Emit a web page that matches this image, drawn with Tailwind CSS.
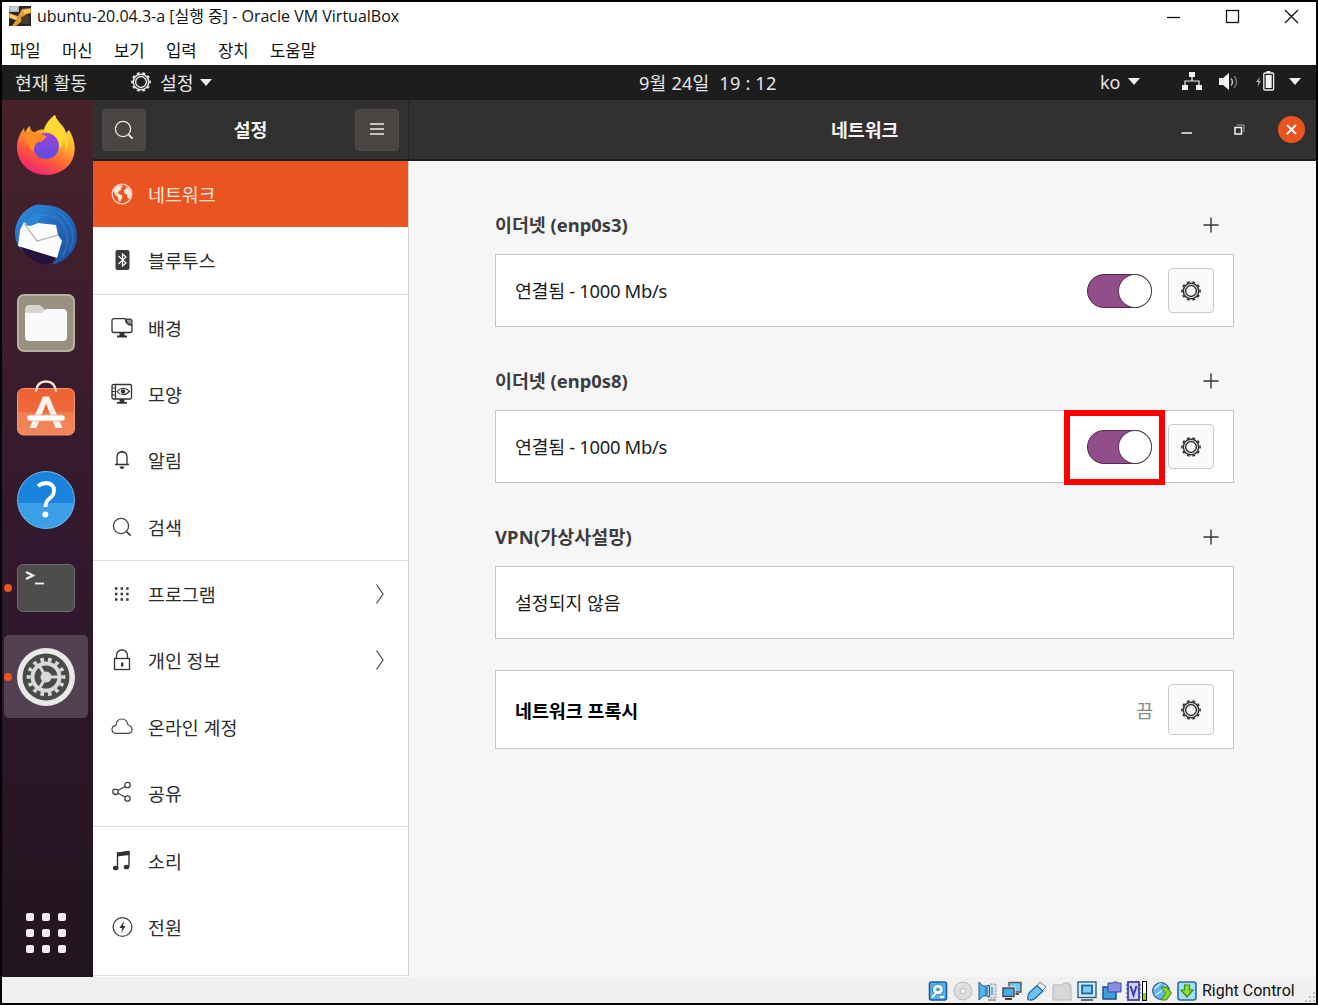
<!DOCTYPE html>
<html lang="ko">
<head>
<meta charset="utf-8">
<title>ubuntu-20.04.3-a - Oracle VM VirtualBox</title>
<script src="https://cdn.jsdelivr.net/npm/@tailwindcss/browser@4"></script>
</head>
<body class="w-[1318px] h-[1005px] overflow-hidden">
<svg class="hidden">
  <defs>
    <symbol id="gear" viewBox="0 0 24 24">
      <g fill="none" stroke="currentColor">
        <circle cx="12" cy="12" r="8.4" stroke-width="1.6"/>
        <circle cx="12" cy="12" r="9.9" stroke-width="1.8" pathLength="120" stroke-dasharray="6 6" stroke-dashoffset="3"/>
        <circle cx="12" cy="12" r="5.9" stroke-width="1.6"/>
      </g>
    </symbol>
    <symbol id="search" viewBox="0 0 20 20">
      <g fill="none" stroke="currentColor" stroke-width="1.3"><circle cx="9" cy="9" r="7.6"/><path d="M14.3 14.3 L18.6 18.6" stroke-width="1.8"/></g>
    </symbol>
  </defs>
</svg>
<div class="w-[1318px] h-[1005px] border-2 border-black bg-white flex flex-col font-['Noto_Sans','Noto_Sans_CJK_KR',sans-serif]">

  <!-- window title -->
  <div class="h-[30px] flex items-center shrink-0 text-[#111] pb-[2px]">
    <svg class="w-[22px] h-[20px] ml-[7px]" viewBox="0 0 22 20">
      <rect width="22" height="20" fill="#2b2522"/>
      <path d="M0 0h10v6H0z" fill="#a9b1bd"/><path d="M1 2h8M2 4h6" stroke="#e8edf2"/>
      <path d="M0 7 L9 10 L13 3 L22 2 V7 L16 9 L12 16 L7 20 H3 L7 14 L0 12Z" fill="#e39a35"/>
      <path d="M1 8 L8 11 L7 14 L1 11Z" fill="#f7d27a"/><path d="M14 4 L21 3 V6 L15 8Z" fill="#f9c865"/>
      <path d="M12 11 L20 9 V18 H13Z" fill="#473a31"/>
    </svg>
    <span class="ml-[6px] w-[362px] text-[16px] leading-[20px] whitespace-nowrap font-['Open_Sans','Noto_Sans_CJK_KR',sans-serif]">ubuntu-20.04.3-a [실행 중] - Oracle VM VirtualBox</span>
    <div class="ml-auto flex items-center mr-[17px] gap-[44px]">
      <svg class="w-[15px] h-[15px]" viewBox="0 0 15 15"><path d="M1 8.500H14" stroke="#111" stroke-width="1.300"/></svg>
      <svg class="w-[15px] h-[15px]" viewBox="0 0 15 15"><rect x="1.500" y="1.500" width="12" height="12" fill="none" stroke="#111" stroke-width="1.300"/></svg>
      <svg class="w-[15px] h-[15px]" viewBox="0 0 15 15"><path d="M1 1L14 14M14 1L1 14" stroke="#111" stroke-width="1.300"/></svg>
    </div>
  </div>
  <div class="h-[33px] shrink-0 flex items-center pl-[8px] text-[16.700px] leading-[20px] text-[#111] pt-[2px] whitespace-nowrap font-['Noto_Sans_CJK_KR',sans-serif]">
    <span class="w-[52px]">파일</span><span class="w-[52px]">머신</span><span class="w-[52px]">보기</span><span class="w-[52px]">입력</span><span class="w-[52px]">장치</span><span>도움말</span>
  </div>

  <!-- GNOME top bar -->
  <div class="h-[35px] shrink-0 bg-[#1d1d1d] flex items-center text-[#e6e6e6] text-[18.3px] leading-[24px] whitespace-nowrap">
    <span class="ml-[13px] w-[115px]">현재 활동</span>
    <svg class="w-[22px] h-[22px] -mt-[2px]"><use href="#gear"/></svg>
    <span class="ml-[8px] w-[40px]">설정</span>
    <svg class="w-[12px] h-[7px]" viewBox="0 0 12 7"><path d="M0 0H12L6 7Z" fill="#eee"/></svg>
    <span class="ml-[427px] w-[140px] text-[18.200px] tracking-[0.180px] whitespace-pre pt-[1px]">9월 24일  19 : 12</span>
    <span class="ml-[321px] w-[28px] text-[18px] -mt-[1px]">ko</span>
    <svg class="w-[12px] h-[7px] -mt-[2px]" viewBox="0 0 12 7"><path d="M0 0H12L6 7Z" fill="#eee"/></svg>
    <svg class="ml-[42px] w-[20px] h-[18px] -mt-[3px]" viewBox="0 0 20 18" fill="#f2f2f2"><path d="M7 0h6v5H7zM0 13h6v5H0zM14 13h6v5h-6z"/><path d="M10 5v4M3 13V9h14v4" fill="none" stroke="#f2f2f2" stroke-width="1.2"/></svg>
    <svg class="ml-[17px] w-[20px] h-[18px] -mt-[2px]" viewBox="0 0 20 18"><path d="M0 5h4l6-5v17l-6-5H0z" fill="#f2f2f2"/><path d="M12 5.5q3 3.5 0 7" fill="none" stroke="#bbb" stroke-width="1.5"/><path d="M15 3q5 6 0 12" fill="none" stroke="#777" stroke-width="1.4"/></svg>
    <svg class="ml-[17px] w-[19px] h-[20px] -mt-[3px]" viewBox="0 0 19 20"><path d="M4 6 L0 11 H2.4 L1.5 16 L5 10H3Z" fill="#aaa"/><path d="M10.5 0h4v2h-4z" fill="#eee"/><rect x="7.8" y="2" width="9.8" height="17" rx="1" fill="none" stroke="#eee" stroke-width="1.3"/><rect x="9.7" y="4" width="6" height="13" fill="#f2f2f2"/></svg>
    <svg class="ml-[14px] w-[12px] h-[7px] -mt-[2px]" viewBox="0 0 12 7"><path d="M0 0H12L6 7Z" fill="#eee"/></svg>
  </div>

  <div class="flex flex-1 min-h-0">
    <!-- dock -->
    <div class="w-[91px] h-[877px] shrink-0 bg-linear-to-b from-[#47222a] via-[#31182f] via-55% to-[#22141d] flex flex-col items-center pt-[2px] pr-[3px]">
      <div class="h-[88.4px] flex items-center">
        <svg class="w-[60px] h-[62px] -mt-[2px]" viewBox="0 0 60 62">
          <defs>
            <linearGradient id="ff1" x1=".8" y1="0" x2=".3" y2="1"><stop offset="0" stop-color="#fff04a"/><stop offset=".4" stop-color="#ffae2a"/><stop offset=".7" stop-color="#ff5a3a"/><stop offset="1" stop-color="#f0207a"/></linearGradient>
            <linearGradient id="ff2" x1="0" y1="0" x2="0" y2="1"><stop offset="0" stop-color="#a13fe0"/><stop offset="1" stop-color="#5b4fd8"/></linearGradient>
          </defs>
          <path d="M39 1 C41 8 49 12 50 19 L53 16 C58 24 60 33 58 41 C55 53 44 61 30 61 C14 61 1 49 1 33 C1 26 4 19 8 14 L9 19 C10 16 12 13 14 12 C14 16 16 18 19 18 C22 16 26 15 28 16 C29 11 33 5 39 1Z" fill="url(#ff1)"/>
          <circle cx="30" cy="32" r="13" fill="url(#ff2)"/>
          <path d="M10 18 C16 16 24 20 31 22 C28 26 26 28 22 28 C19 30 18 33 18 38 C12 33 9 25 10 18Z" fill="#ff8a22"/>
          <path d="M28 17 C37 17 45 26 43 35 C50 28 47 20 40 17 C46 20 52 30 49 38 C54 30 52 20 46 13 C41 9 40 5 39 1 C33 6 29 12 28 17Z" fill="#ffd833"/>
        </svg>
      </div>
      <div class="h-[88.4px] flex items-center">
        <svg class="w-[64px] h-[64px]" viewBox="0 0 64 64">
          <defs><linearGradient id="tb" x1="0" y1="0" x2="1" y2="1"><stop offset="0" stop-color="#2f8fe0"/><stop offset=".5" stop-color="#2369b8"/><stop offset="1" stop-color="#1b4a96"/></linearGradient></defs>
          <path d="M14 6 C20 1 27 1 28 2 C46 1 63 13 63 33 C63 48 52 58 38 62 L42 56 L20 55 C8 50 1 42 1 30 C1 20 7 10 14 6Z" fill="url(#tb)"/>
          <path d="M5 41 C10 53 20 60 34 62 L43 54Z" fill="#25133e"/>
          <path d="M10 19 L16 23 L24 20 L42 22 L44 32 L48 38 L43 55 L4 43 L6 27Z" fill="#fcfcfc"/>
          <path d="M10 20 L23 38 L44 32" fill="none" stroke="#aaa" stroke-width="1.2"/>
          <path d="M12 22 C14 10 26 8 36 13 C28 12 25 16 23 20 L15 23Z" fill="#2c86d6"/>
          <path d="M36 12 C54 18 58 38 48 54 M44 9 C60 20 62 36 55 48" fill="none" stroke="#3b8fdc" stroke-width="2" opacity=".4"/>
        </svg>
      </div>
      <div class="h-[88.4px] flex items-center">
        <div class="w-[58px] h-[58px] rounded-[7px] bg-[#99917f] border-2 border-[#b7b09f] flex items-center justify-center">
          <svg class="w-[44px] h-[38px]" viewBox="0 0 44 38"><path d="M1 6 Q1 1 5 1 H16 L21 6 V12 H1Z" fill="#d8d5cd"/><path d="M1 9 Q14 9 18 9 L22 5 H39 Q43 5 43 9 V33 Q43 37 39 37 H5 Q1 37 1 33Z" fill="#fbfafa"/></svg>
        </div>
      </div>
      <div class="h-[88.4px] flex items-center">
        <svg class="w-[60px] h-[56px] -mt-[7px]" viewBox="0 0 60 56">
          <defs><linearGradient id="sw" x1="0" y1="0" x2="0" y2="1"><stop offset="0" stop-color="#ee6232"/><stop offset=".5" stop-color="#ee6a3b"/><stop offset=".52" stop-color="#f17f52"/><stop offset="1" stop-color="#f1875c"/></linearGradient></defs>
          <rect x="1.5" y="8.5" width="57" height="46.500" rx="6" fill="url(#sw)" stroke="#f49472"/>
          <path d="M20 11.500 Q21 1.500 30 1.500 Q39 1.500 40 11.500" fill="none" stroke="#fbe5d8" stroke-width="2.300"/>
          <path d="M27 16.500 H33 L46.500 48 H39.500 L30 23.500 L20.500 48 H13.500Z" fill="#fdf3ec"/>
          <rect x="11" y="35" width="38" height="6" rx="3" fill="#fff" stroke="#f0a27e" stroke-width=".8"/>
        </svg>
      </div>
      <div class="h-[88.4px] flex items-center">
        <div class="w-[58px] h-[58px] rounded-full border border-[#71b8ec] bg-linear-to-b from-[#1a84dc] from-55% to-[#3b9ee6] to-56% flex items-center justify-center">
          <svg class="w-[24px] h-[38px]" viewBox="0 0 24 38"><path d="M4 5 Q8 2 12 2 Q20 2.500 20 9.500 Q20 14 15.500 17.500 Q11.500 20.500 11.500 26" fill="none" stroke="#fff" stroke-width="3.800"/><circle cx="11.300" cy="33.500" r="3" fill="#fff"/></svg>
        </div>
      </div>
      <div class="h-[88.4px] w-full flex items-center">
        <div class="w-[8px] h-[8px] rounded-full bg-[#e95420] ml-[2px]"></div>
        <div class="ml-[5px] w-[58px] h-[48px] rounded-[6px] bg-[#4d4d4b] border border-[#6f6a6e]">
          <svg class="w-[30px] h-[24px]" viewBox="0 0 30 24"><path d="M8 7 L15 10.500 L8 14" fill="none" stroke="#f5f5f5" stroke-width="2.200"/><path d="M17 18.500h9" stroke="#f5f5f5" stroke-width="1.800"/></svg>
        </div>
      </div>
      <div class="h-[88.4px] w-full flex items-center">
        <div class="w-[84px] h-[83px] shrink-0 rounded-[5px] bg-[#534053] flex items-center ml-[2px]">
          <div class="w-[8px] h-[8px] rounded-full bg-[#e95420]"></div>
          <svg class="w-[58px] h-[58px] ml-[5px]" viewBox="0 0 58 58">
            <circle cx="29" cy="29" r="29" fill="#e9e9e7"/><circle cx="29" cy="29" r="23.500" fill="#484b47"/>
            <circle cx="29" cy="29" r="13.500" fill="none" stroke="#d9d9d7" stroke-width="4"/>
            <circle cx="29" cy="29" r="17.300" fill="none" stroke="#d9d9d7" stroke-width="4" pathLength="140" stroke-dasharray="4.600 5.400" stroke-dashoffset="2.300"/>
            <circle cx="29" cy="29" r="5.500" fill="#d9d9d7"/>
            <path d="M29 29H42M29 29L22.500 40M29 29L22.500 18" stroke="#d9d9d7" stroke-width="3"/>
          </svg>
        </div>
      </div>
      <div class="mt-auto mb-[24px] grid grid-cols-3 gap-[8px]">
        <i class="size-[8px] rounded-[2px] bg-[#f6ecf5]"></i><i class="size-[8px] rounded-[2px] bg-[#f6ecf5]"></i><i class="size-[8px] rounded-[2px] bg-[#f6ecf5]"></i>
        <i class="size-[8px] rounded-[2px] bg-[#f6ecf5]"></i><i class="size-[8px] rounded-[2px] bg-[#f6ecf5]"></i><i class="size-[8px] rounded-[2px] bg-[#f6ecf5]"></i>
        <i class="size-[8px] rounded-[2px] bg-[#f6ecf5]"></i><i class="size-[8px] rounded-[2px] bg-[#f6ecf5]"></i><i class="size-[8px] rounded-[2px] bg-[#f6ecf5]"></i>
      </div>
    </div>

    <!-- settings window -->
    <div class="flex-1 flex flex-col min-w-0">
      <div class="h-[61px] shrink-0 bg-[#323030] border-b-2 border-[#1f1d1d] flex items-center text-[#f4f4f4] font-bold text-[18.3px] leading-[24px]">
        <div class="w-[316px] h-full border-r border-[#252323] flex items-center justify-between pl-[9px] pr-[9px]">
          <div class="w-[44px] h-[42px] rounded-[4px] bg-[#484543] border border-[#504c4a] flex items-center justify-center"><svg class="w-[20px] h-[20px] text-[#eee]"><use href="#search"/></svg></div>
          <span>설정</span>
          <div class="w-[44px] h-[42px] rounded-[4px] bg-[#484543] border border-[#504c4a] flex items-center justify-center"><svg class="w-[14px] h-[14px] -mt-[2px]" viewBox="0 0 14 14"><path d="M0 2H14M0 7H14M0 12H14" stroke="#eee" stroke-width="1.3"/></svg></div>
        </div>
        <span class="ml-[422px] w-[72px]">네트워크</span>
        <svg class="ml-[278px] w-[12px] h-[12px] mt-[3px]" viewBox="0 0 12 12"><path d="M0.500 8H11" stroke="#f4f4f4" stroke-width="1.500"/></svg>
        <svg class="ml-[41px] w-[11px] h-[11px]" viewBox="0 0 11 11"><path d="M1 3.500h6.500V10H1z" fill="none" stroke="#f4f4f4" stroke-width="1.500"/><path d="M3 1h7v7" fill="none" stroke="#aaa" stroke-width="1"/></svg>
        <div class="ml-[33px] w-[27px] h-[27px] rounded-full bg-[#e95420] flex items-center justify-center"><svg class="w-[11px] h-[11px]" viewBox="0 0 11 11"><path d="M1 1L10 10M10 1L1 10" stroke="#fff" stroke-width="1.800"/></svg></div>
      </div>

      <div class="flex flex-1 min-h-0">
        <div class="w-[316px] shrink-0 border-r border-[#cfcfcf] bg-white h-[815px] flex flex-col text-[18.4px] leading-[26px] text-[#2c2c2c] whitespace-nowrap border-b border-b-[#ddd]">
          <div class="h-[66.3px] flex items-center pl-[18px] pt-px bg-[#e95420] text-[#ffe9df]">
            <svg class="size-[22px] mr-[15px] -mt-[2px]" viewBox="0 0 22 22"><circle cx="11" cy="11" r="9.800" fill="none" stroke="#ffd9c9" stroke-width="1.300"/><path d="M2.500 7 Q5 2.500 10 2 L12 4 L9.500 5 L10.500 7 L8 8 L7 10.500 L10.500 12 L11.500 14 L9 19 L7.500 18.500 L7 14.500 L4 11.500Z" fill="#ffe3d6"/><path d="M14 3 L18 5.500 L20.500 10 L20 14 L18 16 L16 14.500 L16 11.500 L13 10 L13 7 L15.500 5.500Z" fill="#ffe3d6"/></svg>
            네트워크</div>
          <div class="h-[66.3px] flex items-center pl-[18px] pt-[2px]">
            <svg class="size-[22px] mr-[15px] -mt-[3px]" viewBox="0 0 22 22"><rect x="4.500" y="1" width="14" height="20" rx="2" fill="#3c3c3c"/><path d="M7.500 7 L15 14 L11.500 17 V5 L15 8 L7.500 15" fill="none" stroke="#fff" stroke-width="1.200"/></svg>
            블루투스</div>
          <div class="h-px bg-[#dcdcdc] shrink-0"></div>
          <div class="h-[66.3px] flex items-center pl-[18px] pt-[2px]">
            <svg class="size-[22px] mr-[15px] -mt-[2px]" viewBox="0 0 22 22"><path d="M14 1.700H3 Q1 1.700 1 3.500 V13.500 Q1 15.500 3 15.500 H19 Q21 15.500 21 13.500 V8" fill="none" stroke="#333" stroke-width="1.300"/><path d="M13.500 1.500 H19 Q21.500 1.500 21.500 4 V9 Q14 9 13.500 1.500Z" fill="#3a3a3a"/><path d="M15.500 2.800 H19 Q20.300 2.800 20.300 4 V7 Q16.500 6.800 15.500 2.800Z" fill="#999"/><path d="M8.500 15.500h5v3h2.500v2H6v-2h2.500z" fill="#333"/></svg>
            배경</div>
          <div class="h-[66.3px] flex items-center pl-[18px] pt-[2px]">
            <svg class="size-[22px] mr-[15px] -mt-[2px]" viewBox="0 0 22 22"><rect x="1" y="1.500" width="19.500" height="14.500" rx="1.500" fill="none" stroke="#333" stroke-width="1.300"/><path d="M4.500 2v14M1 5h3.500M1 8.500h3.500M1 12h3.500" stroke="#333" stroke-width="1.200"/><path d="M6 8.500 Q12 2 18.500 8.500 Q12 15 6 8.500Z" fill="none" stroke="#333" stroke-width="1.100"/><circle cx="12" cy="8.500" r="2.200" fill="#333"/><path d="M8.500 16h5v3h2.500v1.800H6V19h2.500z" fill="#333"/></svg>
            모양</div>
          <div class="h-[66.3px] flex items-center pl-[18px] pt-[2px]">
            <svg class="size-[22px] mr-[15px] -mt-[2px]" viewBox="0 0 22 22"><path d="M4 15.500H18M6 15 V8 Q6 3 11 3 Q16 3 16 8 V15" fill="none" stroke="#333" stroke-width="1.300"/><path d="M9.500 3 Q11 0 12.500 3ZM8.500 17.500H13.500Q13 20 11 20Q9 20 8.500 17.500Z" fill="#333"/></svg>
            알림</div>
          <div class="h-[66.3px] flex items-center pl-[18px] pt-[2px]">
            <svg class="size-[20px] mr-[16px] ml-[1px] -mt-[2px] text-[#444]"><use href="#search"/></svg>
            검색</div>
          <div class="h-px bg-[#e2dcdc] shrink-0"></div>
          <div class="h-[66.3px] flex items-center pl-[18px] pt-[2px]">
            <svg class="size-[22px] mr-[15px] -mt-[2px]" viewBox="0 0 22 22"><path d="M4 5.500h14M4 11h14M4 16.500h14" stroke="#333" stroke-width="2.400" stroke-dasharray="2.400 3.200"/></svg>
            프로그램
            <svg class="ml-auto mr-[23px] w-[10px] h-[22px] -mt-[2px]" viewBox="0 0 10 22"><path d="M1.500 1.500L8 11L1.500 20.500" fill="none" stroke="#555" stroke-width="1.300"/></svg></div>
          <div class="h-[66.3px] flex items-center pl-[18px] pt-[2px]">
            <svg class="size-[22px] mr-[15px] -mt-[2px]" viewBox="0 0 22 22"><rect x="3.500" y="9.500" width="15" height="11" fill="none" stroke="#333" stroke-width="1.300"/><path d="M5.500 9.500V6.500Q6 1 11 1Q16 1 16.500 6.500V9.500" fill="none" stroke="#333" stroke-width="1.300"/><path d="M10 13.500h2.400v4H10z" fill="#333"/></svg>
            개인 정보
            <svg class="ml-auto mr-[23px] w-[10px] h-[22px] -mt-[2px]" viewBox="0 0 10 22"><path d="M1.500 1.500L8 11L1.500 20.500" fill="none" stroke="#555" stroke-width="1.300"/></svg></div>
          <div class="h-[66.3px] flex items-center pl-[18px] pt-[2px]">
            <svg class="size-[22px] mr-[15px] -mt-[3px]" viewBox="0 0 22 22"><path d="M4.800 18.300 Q1 18 1 14.500 Q1 11 5 10.300 Q5.500 4 11 4 Q16 4 17 10 Q21 11 21 14.500 Q21 18 17.200 18.300Z" fill="none" stroke="#444" stroke-width="1.200"/></svg>
            온라인 계정</div>
          <div class="h-[66.3px] flex items-center pl-[18px] pt-[2px]">
            <svg class="size-[22px] mr-[15px] -mt-[3px]" viewBox="0 0 22 22"><g fill="none" stroke="#444" stroke-width="1.300"><circle cx="4.500" cy="10.800" r="2.700"/><circle cx="16.500" cy="4" r="2.700"/><circle cx="16.500" cy="17.500" r="2.700"/><path d="M7 9.500L14 5.500M7 12.200L14 16"/></g></svg>
            공유</div>
          <div class="h-px bg-[#dcdcdc] shrink-0"></div>
          <div class="h-[66.3px] flex items-center pl-[18px] pt-[3px]">
            <svg class="size-[22px] mr-[15px] -mt-[2px]" viewBox="0 0 22 22"><path d="M6.500 18V3L18 1.500V16.500" fill="none" stroke="#333" stroke-width="1.400"/><path d="M6 2.500L18.500 1V5L6 6.500Z" fill="#333"/><ellipse cx="4.700" cy="18" rx="2.800" ry="2.300" fill="#333"/><ellipse cx="15.500" cy="17" rx="2.800" ry="2.300" fill="#333"/></svg>
            소리</div>
          <div class="h-[66.3px] flex items-center pl-[18px] pt-[3px]">
            <svg class="size-[22px] mr-[15px] -mt-[2px]" viewBox="0 0 22 22"><circle cx="11.500" cy="11" r="9.400" fill="none" stroke="#444" stroke-width="1.300"/><path d="M13 5L8.500 12H11.200L10.200 17L14.500 10H12Z" fill="#333"/></svg>
            전원</div>
        </div>

        <div class="flex-1 bg-[#f6f6f6] h-[816px] pl-[86px] pr-[82px] pt-[49px] text-[#1c1c1c] text-[18.400px] leading-[24px] whitespace-nowrap">
          <div class="h-[44px] flex items-end justify-between pb-[17px] pr-[15px] text-[#3c3c3c] font-bold">
            <span>이더넷 (enp0s3)</span>
            <svg class="size-[16px] mb-[4px]" viewBox="0 0 16 16"><path d="M0.500 8H15.500M8 0.500V15.500" stroke="#333" stroke-width="1.400"/></svg>
          </div>
          <div class="h-[73px] bg-white border border-[#c4c4c4] flex items-center pl-[19px] pr-[19px]">
            <span class="mr-auto tracking-[-0.320px]">연결됨 - 1000 Mb/s</span>
            <div class="w-[65px] h-[34px] rounded-full bg-[#924d8b] border border-[#4e2b4a] flex justify-end"><i class="size-[32px] rounded-full bg-white ring-1 ring-[#5b4058]"></i></div>
            <div class="ml-[16px] w-[46px] h-[45px] rounded-[4px] bg-[#fafafa] border border-[#cbcbcb] flex items-center justify-center text-[#333]"><svg class="size-[22px]"><use href="#gear"/></svg></div>
          </div>
          <div class="h-[83px] flex items-end justify-between pb-[17px] pr-[15px] text-[#3c3c3c] font-bold">
            <span>이더넷 (enp0s8)</span>
            <svg class="size-[16px] mb-[4px]" viewBox="0 0 16 16"><path d="M0.500 8H15.500M8 0.500V15.500" stroke="#333" stroke-width="1.400"/></svg>
          </div>
          <div class="h-[73px] bg-white border border-[#c4c4c4] flex items-center pl-[19px] pr-[19px]">
            <span class="mr-auto tracking-[-0.320px]">연결됨 - 1000 Mb/s</span>
            <div class="relative w-[65px] h-[34px] rounded-full bg-[#924d8b] border border-[#4e2b4a] flex justify-end"><i class="size-[32px] rounded-full bg-white ring-1 ring-[#5b4058]"></i>
              <div class="absolute left-[-24px] top-[-21px] w-[101px] h-[75px] border-[6px] border-[#ff0000]"></div>
            </div>
            <div class="ml-[16px] w-[46px] h-[45px] rounded-[4px] bg-[#fafafa] border border-[#cbcbcb] flex items-center justify-center text-[#333]"><svg class="size-[22px]"><use href="#gear"/></svg></div>
          </div>
          <div class="h-[83px] flex items-end justify-between pb-[17px] pr-[15px] text-[#3c3c3c] font-bold">
            <span class="tracking-[0.150px]">VPN(가상사설망)</span>
            <svg class="size-[16px] mb-[4px]" viewBox="0 0 16 16"><path d="M0.500 8H15.500M8 0.500V15.500" stroke="#333" stroke-width="1.400"/></svg>
          </div>
          <div class="h-[73px] bg-white border border-[#c4c4c4] flex items-center pl-[19px] text-[18.300px]">설정되지 않음</div>
          <div class="mt-[31px] h-[79px] bg-white border border-[#c4c4c4] flex items-center pl-[19px] pr-[19px]">
            <span class="mr-auto font-bold text-black pt-[2px]">네트워크 프록시</span>
            <span class="text-[#8a8a8a] text-[18.300px] pt-[2px]">끔</span>
            <div class="ml-[15px] w-[46px] h-[51px] rounded-[4px] bg-[#fafafa] border border-[#cbcbcb] flex items-center justify-center text-[#333]"><svg class="size-[22px]"><use href="#gear"/></svg></div>
          </div>
        </div>
      </div>
    </div>
  </div>

  <!-- VirtualBox status bar -->
  <div class="h-[26px] shrink-0 bg-[#f0f0f0] flex items-center justify-end pt-[1px] relative">
    <div class="flex items-center gap-[4.800px]">
      <svg class="size-[20px]" viewBox="0 0 20 20"><rect x="1.500" y="1" width="17" height="18" rx="2" fill="#56b4ef" stroke="#1d5c9c" stroke-width="1.600"/><circle cx="10" cy="8.500" r="5.500" fill="#e8f6ff" stroke="#2a79bc"/><circle cx="10" cy="8.500" r="1.800" fill="#3b90d0"/><path d="M4 16.500L9.500 10.500M12 16h4" stroke="#fff" stroke-width="1.800"/></svg>
      <svg class="size-[20px]" viewBox="0 0 20 20"><circle cx="10" cy="10" r="9" fill="#dcdcdc" stroke="#b9b9b9"/><circle cx="10" cy="10" r="2.600" fill="#f4f4f4" stroke="#bbb"/><path d="M4 6q2-2 4-2" stroke="#f4f4f4" fill="none"/></svg>
      <svg class="size-[20px]" viewBox="0 0 20 20"><path d="M12 3h6v14h-8" fill="#ddd" stroke="#999" stroke-dasharray="2 1"/><path d="M10 19h8" stroke="#999" stroke-width="1.600"/><path d="M1 1L5 5H8V15H5L1 19Z" fill="#54b6ec" stroke="#1d5f9e"/><path d="M9 4.500h2.500v11H9z" fill="#8fd4f7" stroke="#1d5f9e"/><path d="M14 6v8" stroke="#4b98cd" stroke-width="1.500"/></svg>
      <svg class="size-[20px]" viewBox="0 0 20 20"><rect x="7" y="1.500" width="12" height="9.500" fill="#74c7f5" stroke="#555" stroke-width="1.400"/><path d="M12 13h5" stroke="#555" stroke-width="2"/><rect x="1" y="7" width="11" height="8.500" fill="#4aa9e6" stroke="#f5f5f5" stroke-width="3"/><rect x="1" y="7" width="11" height="8.500" fill="#4aa9e6" stroke="#444" stroke-width="1.400"/><path d="M3 18h7" stroke="#444" stroke-width="2"/></svg>
      <svg class="size-[20px]" viewBox="0 0 20 20"><path d="M13 1L19 6L15 10L10 5Z" fill="#f5f5f5" stroke="#777"/><path d="M10 4.500L16 10L8 17.500Q5 20 1 18.500Q0 14 3 11Z" fill="#6cc1f3" stroke="#24639f" stroke-width="1.200"/></svg>
      <svg class="size-[20px]" viewBox="0 0 20 20"><path d="M1 4h9l2-2h5v2h2v15H1z" fill="#d7d7d7" stroke="#b5b5b5"/></svg>
      <svg class="size-[20px]" viewBox="0 0 20 20"><rect x="1" y="1" width="18" height="15.500" fill="#d6eefb" stroke="#2a5f92" stroke-width="1.400"/><rect x="5" y="4.500" width="10" height="8" fill="#7ccbf6" stroke="#1b64a5" stroke-width="1.800"/><path d="M4 19h12" stroke="#456" stroke-width="1.600"/></svg>
      <svg class="size-[20px]" viewBox="0 0 20 20"><rect x="1" y="6" width="13" height="12" fill="#3f9fe0" stroke="#1f4f85" stroke-width="1.500"/><path d="M6 2h5l1-1h3l1 1h3v9H6z" fill="#8a8ee0" stroke="#40449d"/></svg>
      <div class="flex gap-[1px]"><svg class="w-[15px] h-[20px]" viewBox="0 0 15 20"><rect x="2" y="1" width="11" height="18" fill="#cfd0f6" stroke="#3a3f96" stroke-width="1.700"/><path d="M0 4h2M0 8h2M0 12h2M0 16h2M13 4h2M13 8h2M13 12h2M13 16h2" stroke="#3a3f96"/><path d="M4.500 5L7.500 14L10.500 5" fill="none" stroke="#3a3fa0" stroke-width="2"/></svg><i class="w-[5px] h-[20px] border border-black bg-linear-to-b from-white from-60% to-[#7fd11f] to-61%"></i></div>
      <svg class="size-[20px]" viewBox="0 0 20 20"><circle cx="9" cy="10" r="8.300" fill="#69b6ee" stroke="#27608f" stroke-width="1.200"/><path d="M2 8Q9 2 9 2M3 14Q9 12 14 4" stroke="#d5efff" fill="none" stroke-width="1.200"/><path d="M9 6H14.500L19.500 12L14.500 19H9L13.500 12.500Z" fill="#86d926" stroke="#3c7f1b"/></svg>
      <svg class="size-[20px]" viewBox="0 0 20 20"><rect x="1" y="1" width="18" height="18" rx="2.500" fill="#a5dcf8" stroke="#2b6ba0" stroke-width="1.600"/><path d="M7.500 4h5v5h3.500L10 16L4 9h3.500z" fill="#8fe02a" stroke="#3d8a1c" stroke-width="1.200"/></svg>
    </div>
    <span class="ml-[5px] mr-[3px] w-[111px] text-[16px] leading-[20px] text-[#111] whitespace-nowrap font-['Roboto',sans-serif]">Right Control</span>
    <svg class="absolute right-0 bottom-0 size-[11px]" viewBox="0 0 11 11"><path d="M8 0h2v2H8zM4 4h2v2H4zM8 4h2v2H8zM0 8h2v2H0zM4 8h2v2H4zM8 8h2v2H8z" fill="#bdbdbd"/></svg>
  </div>
</div>
</body>
</html>
